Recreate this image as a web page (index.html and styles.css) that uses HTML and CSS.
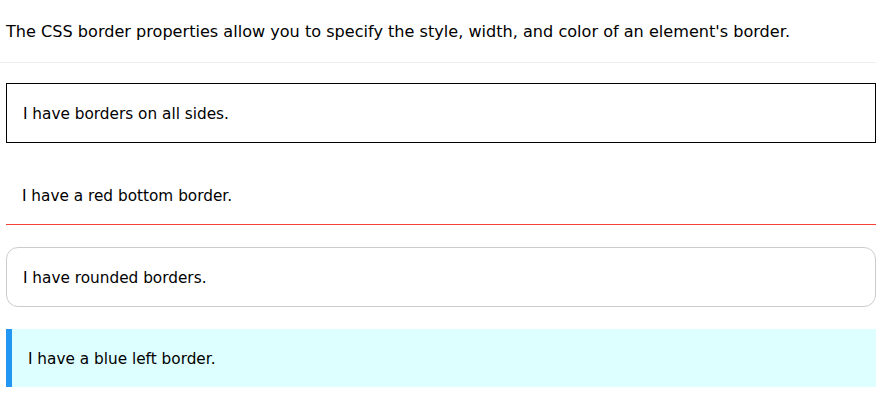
FILE: index.html
```html
<!DOCTYPE html>
<html>
<head>
<meta charset="utf-8">
<link rel="stylesheet" href="styles.css">
</head>
<body>
<div class="intro">The CSS border properties allow you to specify the style, width, and color of an element's border.</div>
<div class="sep"></div>
<div class="list">
  <div class="panel all">I have borders on all sides.</div>
  <div class="panel red">I have a red bottom border.</div>
  <div class="panel round">I have rounded borders.</div>
  <div class="panel blue">I have a blue left border.</div>
</div>
</body>
</html>
```
FILE: styles.css
```css
html, body {
  margin: 0;
  padding: 0;
  background: #fff;
}
body {
  font-family: "DejaVu Sans", Verdana, sans-serif;
  color: #000;
  width: 876px;
  overflow: hidden;
}
.intro {
  height: 62px;
  display: flex;
  align-items: center;
  padding-left: 6px;
  font-size: 16.1px;
}
.sep {
  height: 1px;
  background: #eeeeee;
}
.list {
  display: flex;
  flex-direction: column;
  gap: 22px;
  padding: 20px 0 0 6px;
}
.panel {
  height: 58px;
  display: flex;
  align-items: center;
  padding: 2px 16px 0;
  box-sizing: content-box;
  font-size: 15.3px;
}
.panel {
  height: 56px;
}
.all {
  border: 1px solid #000;
}
.red {
  border-top: 1px solid transparent;
  border-bottom: 1px solid #f44336;
}
.round {
  border: 1px solid #ccc;
  border-radius: 12px;
}
.blue {
  border-left: 6px solid #2196f3;
  background: #ddffff;
}
```
